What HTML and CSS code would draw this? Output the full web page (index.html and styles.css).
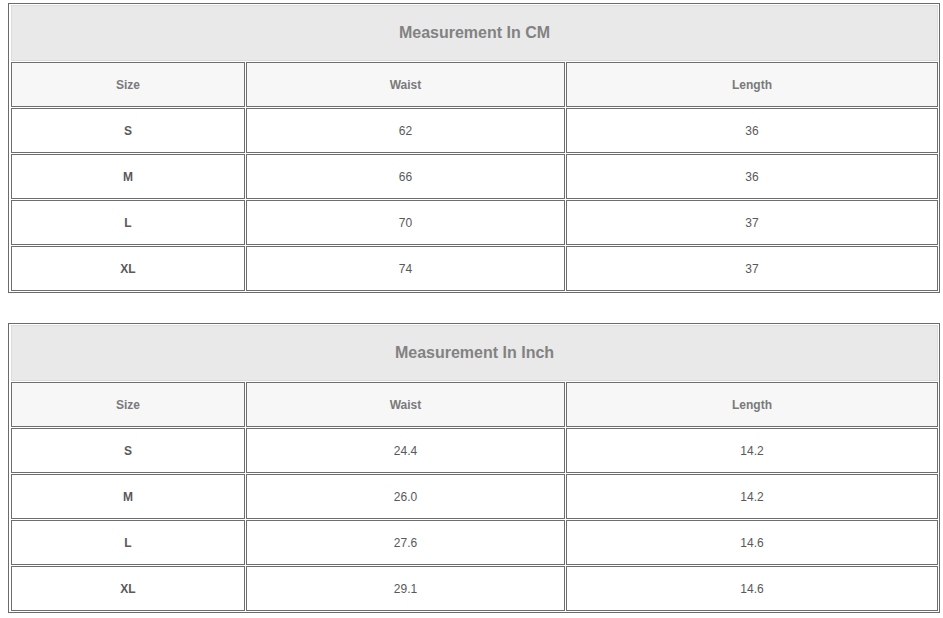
FILE: index.html
```html
<!DOCTYPE html>
<html>
<head>
<meta charset="utf-8">
<link rel="stylesheet" href="styles.css">
</head>
<body>
<table class="size-table">
  <tr><th class="title" colspan="3">Measurement In CM</th></tr>
  <tr class="head"><th class="c-size">Size</th><th class="c-waist">Waist</th><th class="c-length">Length</th></tr>
  <tr><td class="sz">S</td><td>62</td><td>36</td></tr>
  <tr><td class="sz">M</td><td>66</td><td>36</td></tr>
  <tr><td class="sz">L</td><td>70</td><td>37</td></tr>
  <tr><td class="sz">XL</td><td>74</td><td>37</td></tr>
</table>
<table class="size-table second">
  <tr><th class="title" colspan="3">Measurement In Inch</th></tr>
  <tr class="head"><th class="c-size">Size</th><th class="c-waist">Waist</th><th class="c-length">Length</th></tr>
  <tr><td class="sz">S</td><td>24.4</td><td>14.2</td></tr>
  <tr><td class="sz">M</td><td>26.0</td><td>14.2</td></tr>
  <tr><td class="sz">L</td><td>27.6</td><td>14.6</td></tr>
  <tr><td class="sz">XL</td><td>29.1</td><td>14.6</td></tr>
</table>
</body>
</html>
```

FILE: styles.css
```css
html, body {
  background: #ffffff;
}
body {
  margin: 3px 0 0 8px;
  font-family: "Liberation Sans", Arial, sans-serif;
}
.size-table {
  border-collapse: separate;
  border-spacing: 1px;
  border: 1px solid #6b6b6b;
  padding: 0 0 0 1px;
  table-layout: auto;
}
.size-table.second {
  margin-top: 30px;
}
.size-table th,
.size-table td {
  box-sizing: border-box;
  padding: 0;
  text-align: center;
  vertical-align: middle;
  border: 1px solid #6e6e6e;
  height: 45px;
  font-size: 12px;
}
.size-table th.title {
  height: 56px;
  background: #e9e9e9;
  border: 1px solid #dcdcdc;
  color: #828282;
  font-size: 16px;
  font-weight: bold;
}
.size-table .head th {
  background: #f7f7f7;
  color: #7a7a7a;
  font-weight: bold;
}
.c-size { width: 234px; }
.c-waist { width: 319px; }
.c-length { width: 372px; }
.size-table td {
  background: #ffffff;
  color: #595959;
}
.size-table td.sz {
  font-weight: bold;
  color: #5a5a5a;
}
```
